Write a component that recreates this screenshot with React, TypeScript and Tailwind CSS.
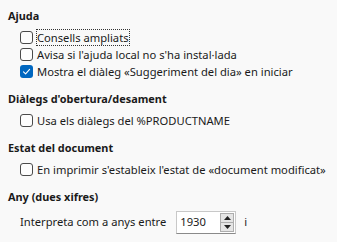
import React from "react";

type CheckProps = { label: string; checked?: boolean; focused?: boolean };

function Check({ label, checked = false, focused = false }: CheckProps) {
  return (
    <label className="flex h-[17px] items-center gap-[4px] whitespace-nowrap pl-[12px]">
      {checked ? (
        <span className="flex h-[13px] w-[13px] shrink-0 items-center justify-center rounded-[3px] bg-[#0067c0]">
          <svg width="9" height="9" viewBox="0 0 9 9" fill="none">
            <path d="M1.5 4.8 L3.6 6.8 L7.6 2.4" stroke="#ffffff" strokeWidth="1.1" strokeLinecap="round" strokeLinejoin="round" />
          </svg>
        </span>
      ) : (
        <span className="h-[13px] w-[13px] shrink-0 rounded-[3px] border border-[#4a4a4a] bg-[#fdfdfd]" />
      )}
      <span className={focused ? "outline-1 outline-dotted outline-[#333] leading-[15px]" : "leading-[15px]"}>{label}</span>
    </label>
  );
}

function Section({ title, children }: { title: string; children: React.ReactNode }) {
  return (
    <section className="flex flex-col">
      <h2 className="h-[16px] whitespace-nowrap text-[10.9px] font-bold leading-[16px]">{title}</h2>
      <div className="mt-[5px] flex flex-col">{children}</div>
    </section>
  );
}

export default function App() {
  return (
    <div
      className="flex h-[242px] w-[337px] flex-col gap-[11px] bg-[#f9f9f9] pl-[8px] pt-[8px] text-[11.2px] text-[#1a1a1a]"
      style={{ fontFamily: '"Noto Sans", "Open Sans", sans-serif' }}
    >
      <Section title="Ajuda">
        <Check label="Consells ampliats" focused />
        <Check label="Avisa si l'ajuda local no s'ha instal·lada" />
        <Check label="Mostra el diàleg «Suggeriment del dia» en iniciar" checked />
      </Section>
      <Section title="Diàlegs d'obertura/desament">
        <Check label="Usa els diàlegs del %PRODUCTNAME" />
      </Section>
      <Section title="Estat del document">
        <Check label="En imprimir s'estableix l'estat de «document modificat»" />
      </Section>
      <Section title="Any (dues xifres)">
        <div className="flex h-[24px] items-center whitespace-nowrap pl-[12px]">
          <span>Interpreta com a anys entre</span>
          <div className="ml-[10px] flex h-[23px] w-[60px] items-center border border-[#c8c8c8] border-b-[#8a8a8a] bg-white pl-[3px] pr-[1px]">
            <span className="flex-1">1930</span>
            <div className="flex h-[19px] w-[14px] flex-col border border-[#adadad]">
              <button className="flex flex-1 items-center justify-center border-b border-[#adadad] bg-[#e5e5e5]">
                <svg width="7" height="4" viewBox="0 0 7 4"><path d="M0 4 L3.5 0 L7 4 Z" fill="#222" /></svg>
              </button>
              <button className="flex flex-1 items-center justify-center bg-[#e5e5e5]">
                <svg width="7" height="4" viewBox="0 0 7 4"><path d="M0 0 L3.5 4 L7 0 Z" fill="#222" /></svg>
              </button>
            </div>
          </div>
          <span className="ml-[8px]">i</span>
        </div>
      </Section>
    </div>
  );
}
